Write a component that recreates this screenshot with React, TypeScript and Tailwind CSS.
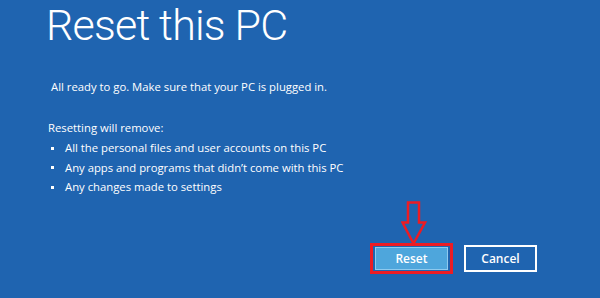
export default function App() {
  return (
    <div className="w-[600px] h-[298px] bg-[#1f64b0] text-white overflow-hidden font-['Open_Sans',sans-serif]">
      <h1 className="pl-[46px] font-['Roboto',sans-serif] text-[43px] leading-[51px] font-light tracking-[-0.8px]">Reset this PC</h1>

      <div className="pl-[51px] pt-[28px] text-[11.3px] leading-[16px]">
        <p>All ready to go. Make sure that your PC is plugged in.</p>
        <p className="mt-[25px] -ml-[3px]">Resetting will remove:</p>
        <ul className="mt-[4px] -ml-[2px] flex flex-col gap-[3.5px]">
          {[
            'All the personal files and user accounts on this PC',
            'Any apps and programs that didn’t come with this PC',
            'Any changes made to settings',
          ].map((item) => (
            <li key={item} className="flex items-center">
              <span className="w-[3px] h-[3px] bg-white ml-[2px] mr-[11px]" />
              {item}
            </li>
          ))}
        </ul>
      </div>

      <div className="flex justify-end items-center gap-[11px] pr-[63px] mt-[48px]">
        <div className="relative border-[3px] border-[#ec1c24] px-[2px] py-[1px]">
          <svg
            className="absolute left-[28px] -top-[45px]"
            width="26"
            height="44"
            viewBox="0 0 26 44"
          >
            <path
              d="M7 1.5 H18 V21.5 H24 L12.5 42.5 L1.5 21.5 H7 Z"
              fill="none"
              stroke="#ec1c24"
              strokeWidth="2.5"
            />
          </svg>
          <button className="block w-[73px] h-[23px] bg-[#4ea6dc] border border-[#8fcaee] text-[12px] font-semibold text-white">
            Reset
          </button>
        </div>
        <button className="w-[73px] h-[27px] border-2 border-white text-[12px] font-semibold text-white">
          Cancel
        </button>
      </div>
    </div>
  );
}
